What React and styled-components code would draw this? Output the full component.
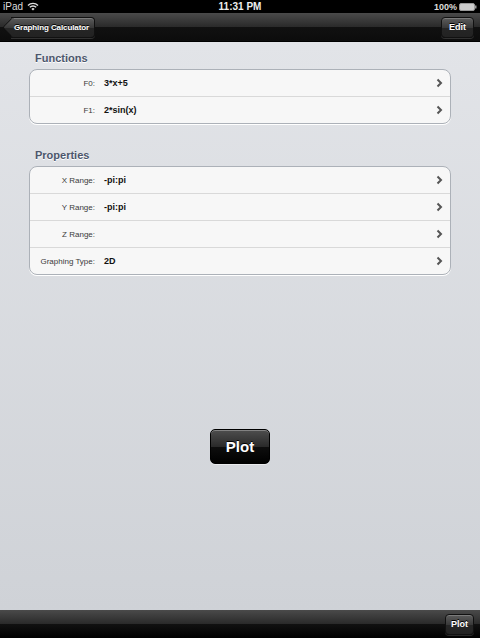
import React from "react";
import styled, { createGlobalStyle } from "styled-components";

const GlobalStyle = createGlobalStyle`
  html, body {
    margin: 0;
    padding: 0;
    background: #000;
  }
  body {
    font-family: "Liberation Sans", Arial, sans-serif;
  }
`;

const functions = [
  { label: "F0:", value: "3*x+5" },
  { label: "F1:", value: "2*sin(x)" },
];

const properties = [
  { label: "X Range:", value: "-pi:pi" },
  { label: "Y Range:", value: "-pi:pi" },
  { label: "Z Range:", value: "" },
  { label: "Graphing Type:", value: "2D" },
];

const Chevron = () => (
  <svg width="7" height="10" viewBox="0 0 7 10">
    <path d="M1.5 1.5 L5 5 L1.5 8.5" fill="none" stroke="#555" strokeWidth="2" />
  </svg>
);

const Wifi = () => (
  <svg width="12" height="9" viewBox="0 0 12 9">
    <path d="M1 3.5 A7 7 0 0 1 11 3.5" fill="none" stroke="#ddd" strokeWidth="1.4" />
    <path d="M2.8 5.3 A4.5 4.5 0 0 1 9.2 5.3" fill="none" stroke="#ddd" strokeWidth="1.4" />
    <path d="M6 8.5 L4.4 6.9 A2.2 2.2 0 0 1 7.6 6.9 Z" fill="#ddd" />
  </svg>
);

const Battery = () => (
  <svg width="18" height="8" viewBox="0 0 18 8">
    <rect x="0.5" y="0.5" width="15" height="7" rx="1.5" fill="#ccc" stroke="#999" />
    <rect x="16" y="2.5" width="1.5" height="3" fill="#999" />
  </svg>
);

const App = () => (
  <Screen>
    <GlobalStyle />
    <StatusBar>
      <StatusLeft>
        iPad <Wifi />
      </StatusLeft>
      <Clock>11:31 PM</Clock>
      <StatusRight>
        100% <Battery />
      </StatusRight>
    </StatusBar>
    <NavBar>
      <BackButton>
        <ButtonText>Graphing Calculator</ButtonText>
      </BackButton>
      <BarButton>Edit</BarButton>
    </NavBar>
    <Content>
      <SectionTitle>Functions</SectionTitle>
      <Group>
        {functions.map((f) => (
          <Row key={f.label}>
            <Label>{f.label}</Label>
            <Value>{f.value}</Value>
            <Chevron />
          </Row>
        ))}
      </Group>
      <SectionTitle $gap>Properties</SectionTitle>
      <Group>
        {properties.map((p) => (
          <Row key={p.label}>
            <Label>{p.label}</Label>
            <Value>{p.value}</Value>
            <Chevron />
          </Row>
        ))}
      </Group>
      <PlotArea>
        <PlotButton>Plot</PlotButton>
      </PlotArea>
    </Content>
    <Toolbar>
      <BarButton $compact>Plot</BarButton>
    </Toolbar>
  </Screen>
);

export default App;

const Screen = styled.div`
  width: 480px;
  height: 638px;
  display: flex;
  flex-direction: column;
  overflow: hidden;
`;

const StatusBar = styled.div`
  height: 13px;
  background: #000;
  color: #ddd;
  font-size: 10px;
  display: flex;
  align-items: center;
  justify-content: space-between;
  padding: 0 3px;
  position: relative;
`;

const StatusLeft = styled.div`
  display: flex;
  align-items: center;
  gap: 4px;
`;

const StatusRight = styled.div`
  display: flex;
  align-items: center;
  gap: 2px;
  font-weight: bold;
  font-size: 9px;
`;

const Clock = styled.div`
  position: absolute;
  left: 0;
  right: 0;
  text-align: center;
  font-weight: bold;
  font-size: 10px;
  color: #eee;
`;

const NavBar = styled.div`
  height: 28px;
  background: linear-gradient(#4a4a4a 0%, #2a2a2a 50%, #111 51%, #0c0c0c 100%);
  border-bottom: 1px solid #000;
  display: flex;
  align-items: center;
  justify-content: space-between;
  padding: 0 6px 0 5px;
`;

const BarButton = styled.div`
  height: 19px;
  padding: ${(p) => (p.$compact ? "0 5px" : "0 7px")};
  border-radius: 4px;
  border: 1px solid #111;
  background: linear-gradient(#5c5c5c 0%, #3a3a3a 50%, #262626 51%, #222 100%);
  box-shadow: inset 0 1px 0 rgba(255, 255, 255, 0.2), 0 1px 0 rgba(255, 255, 255, 0.15);
  color: #fff;
  font-size: 9px;
  font-weight: bold;
  display: flex;
  align-items: center;
  text-shadow: 0 -1px 0 #000;
`;

const BackButton = styled(BarButton)`
  position: relative;
  padding: 0 5px 0 3px;
  border-left: none;
  border-radius: 0 4px 4px 0;
  margin-left: 6px;
  font-size: 8px;
  letter-spacing: -0.1px;

  &::before {
    content: "";
    position: absolute;
    left: -6px;
    top: 2px;
    width: 14px;
    height: 14px;
    transform: rotate(45deg);
    background: linear-gradient(135deg, #5c5c5c 0%, #3a3a3a 50%, #262626 51%, #222 100%);
    border-left: 1px solid #111;
    border-bottom: 1px solid #111;
    border-radius: 0 0 0 3px;
  }
`;

const ButtonText = styled.span`
  position: relative;
  z-index: 1;
`;

const Content = styled.div`
  flex: 1;
  background: linear-gradient(#e2e4e8, #cfd2d7);
  padding: 10px 29px 0 29px;
  display: flex;
  flex-direction: column;
`;

const SectionTitle = styled.div`
  color: #4c566c;
  font-size: 11px;
  font-weight: bold;
  padding-left: 6px;
  margin-top: ${(p) => (p.$gap ? "25px" : "0")};
  margin-bottom: 5px;
  text-shadow: 0 1px 0 #fff;
`;

const Group = styled.div`
  background: #f7f7f7;
  border: 1px solid #acb1b8;
  border-radius: 8px;
  box-shadow: 0 1px 0 #fff;
  overflow: hidden;
`;

const Row = styled.div`
  height: 26px;
  display: flex;
  align-items: center;
  padding-right: 7px;
  border-top: 1px solid #d9d9d9;

  &:first-child {
    border-top: none;
  }
`;

const Label = styled.div`
  width: 65px;
  text-align: right;
  font-size: 8px;
  color: #3a3a3a;
`;

const Value = styled.div`
  flex: 1;
  padding-left: 9px;
  font-size: 9px;
  font-weight: bold;
  color: #111;
`;

const PlotArea = styled.div`
  flex: 1;
  display: flex;
  justify-content: center;
  align-items: center;
  padding-top: 7px;
`;

const PlotButton = styled.div`
  width: 58px;
  height: 33px;
  border-radius: 5px;
  border: 1px solid #000;
  background: linear-gradient(#4e4e4e 0%, #2a2a2a 50%, #0e0e0e 51%, #000 100%);
  box-shadow: inset 0 1px 0 rgba(255, 255, 255, 0.3), 0 1px 0 rgba(255, 255, 255, 0.5);
  color: #fff;
  font-size: 15px;
  font-weight: bold;
  display: flex;
  align-items: center;
  justify-content: center;
  text-shadow: 0 -1px 0 #000;
`;

const Toolbar = styled.div`
  height: 28px;
  background: linear-gradient(#4a4a4a 0%, #2a2a2a 50%, #111 51%, #000 100%);
  display: flex;
  align-items: center;
  justify-content: flex-end;
  padding: 0 6px;
`;
